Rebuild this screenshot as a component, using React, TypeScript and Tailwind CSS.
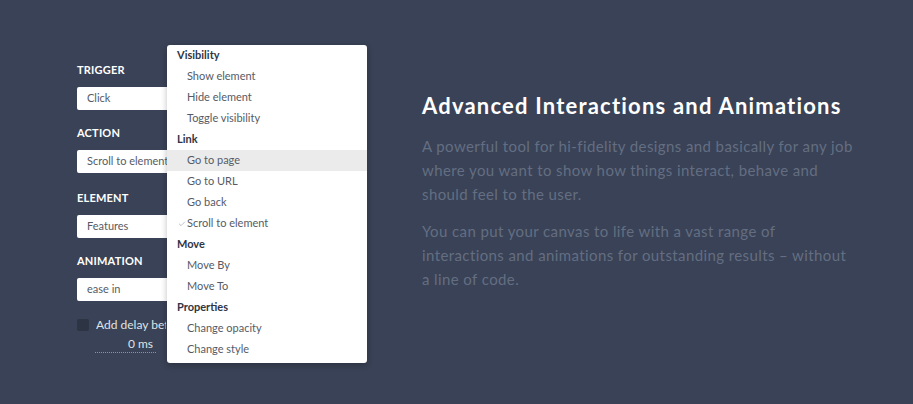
import { Check } from "lucide-react";

const font = "font-['Lato','Open_Sans',sans-serif]";

type MenuRow = { label: string; header?: boolean; active?: boolean; checked?: boolean };

const MENU: MenuRow[] = [
  { label: "Visibility", header: true },
  { label: "Show element" },
  { label: "Hide element" },
  { label: "Toggle visibility" },
  { label: "Link", header: true },
  { label: "Go to page", active: true },
  { label: "Go to URL" },
  { label: "Go back" },
  { label: "Scroll to element", checked: true },
  { label: "Move", header: true },
  { label: "Move By" },
  { label: "Move To" },
  { label: "Properties", header: true },
  { label: "Change opacity" },
  { label: "Change style" },
];

function Field({ label, value, className }: { label: string; value: string; className?: string }) {
  return (
    <div className={className}>
      <div className="h-[14px] text-[11px] font-bold uppercase leading-[14px] tracking-[0.2px] text-white">
        {label}
      </div>
      <div className="mt-[10px] flex h-[23px] w-[190px] items-center rounded-[2px] bg-white pl-[10px] text-[11px] text-[#555b66]">
        {value}
      </div>
    </div>
  );
}

function ActionMenu() {
  return (
    <div className="absolute left-[90px] top-[-18px] w-[200px] rounded-[3px] bg-white pb-[3px] shadow-[0_2px_6px_rgba(0,0,0,0.25)]">
      {MENU.map((row) =>
        row.header ? (
          <div key={row.label} className="flex h-[21px] items-center pl-[10px] text-[11px] font-bold text-[#2f3545]">
            {row.label}
          </div>
        ) : (
          <div
            key={row.label}
            className={`relative flex h-[21px] items-center pl-[20px] text-[11px] text-[#555b66] ${row.active ? "bg-[#ebebeb]" : ""}`}
          >
            {row.checked && (
              <Check className="absolute left-[11px] top-[7px] h-[8px] w-[8px] text-[#9aa0aa]" strokeWidth={2} />
            )}
            {row.label}
          </div>
        ),
      )}
    </div>
  );
}

export default function App() {
  return (
    <div className={`flex h-[404px] w-full overflow-hidden bg-[#394256] ${font}`}>
      <div className="w-[422px] shrink-0 pl-[77px] pt-[63px]">
        <div className="relative">
          <Field label="Trigger" value="Click" />
          <Field label="Action" value="Scroll to element" className="mt-[16px]" />
          <Field label="Element" value="Features" className="mt-[18px]" />
          <Field label="Animation" value="ease in" className="mt-[16px]" />

          <div className="mt-[15px] flex items-center gap-[7px]">
            <div className="h-[12px] w-[12px] shrink-0 rounded-[2px] bg-[#2d3444]" />
            <span className="w-[70px] overflow-hidden whitespace-nowrap text-[12px] text-[#dfe2e8]">
              Add delay before animation
            </span>
          </div>
          <div className="ml-[18px] mt-[3px] w-[61px] border-b border-dotted border-[#8a92a3] pb-[1px] pr-[3px] text-right text-[12px] leading-[14px] text-[#dfe2e8]">
            0 ms
          </div>

          <ActionMenu />
        </div>
      </div>

      <div className="pt-[92px]">
        <h1 className="text-[22px] font-bold leading-[28px] tracking-[1.2px] text-white">
          Advanced Interactions and Animations
        </h1>
        <p className="mt-[14px] w-[434px] text-[15px] leading-[24px] tracking-[0.4px] text-[#646e82]">
          A powerful tool for hi-fidelity designs and basically for any job where you want to show how things
          interact, behave and should feel to the user.
        </p>
        <p className="mt-[13px] w-[434px] text-[15px] leading-[24px] tracking-[0.4px] text-[#646e82]">
          You can put your canvas to life with a vast range of interactions and animations for outstanding results
          – without a line of code.
        </p>
      </div>
    </div>
  );
}
